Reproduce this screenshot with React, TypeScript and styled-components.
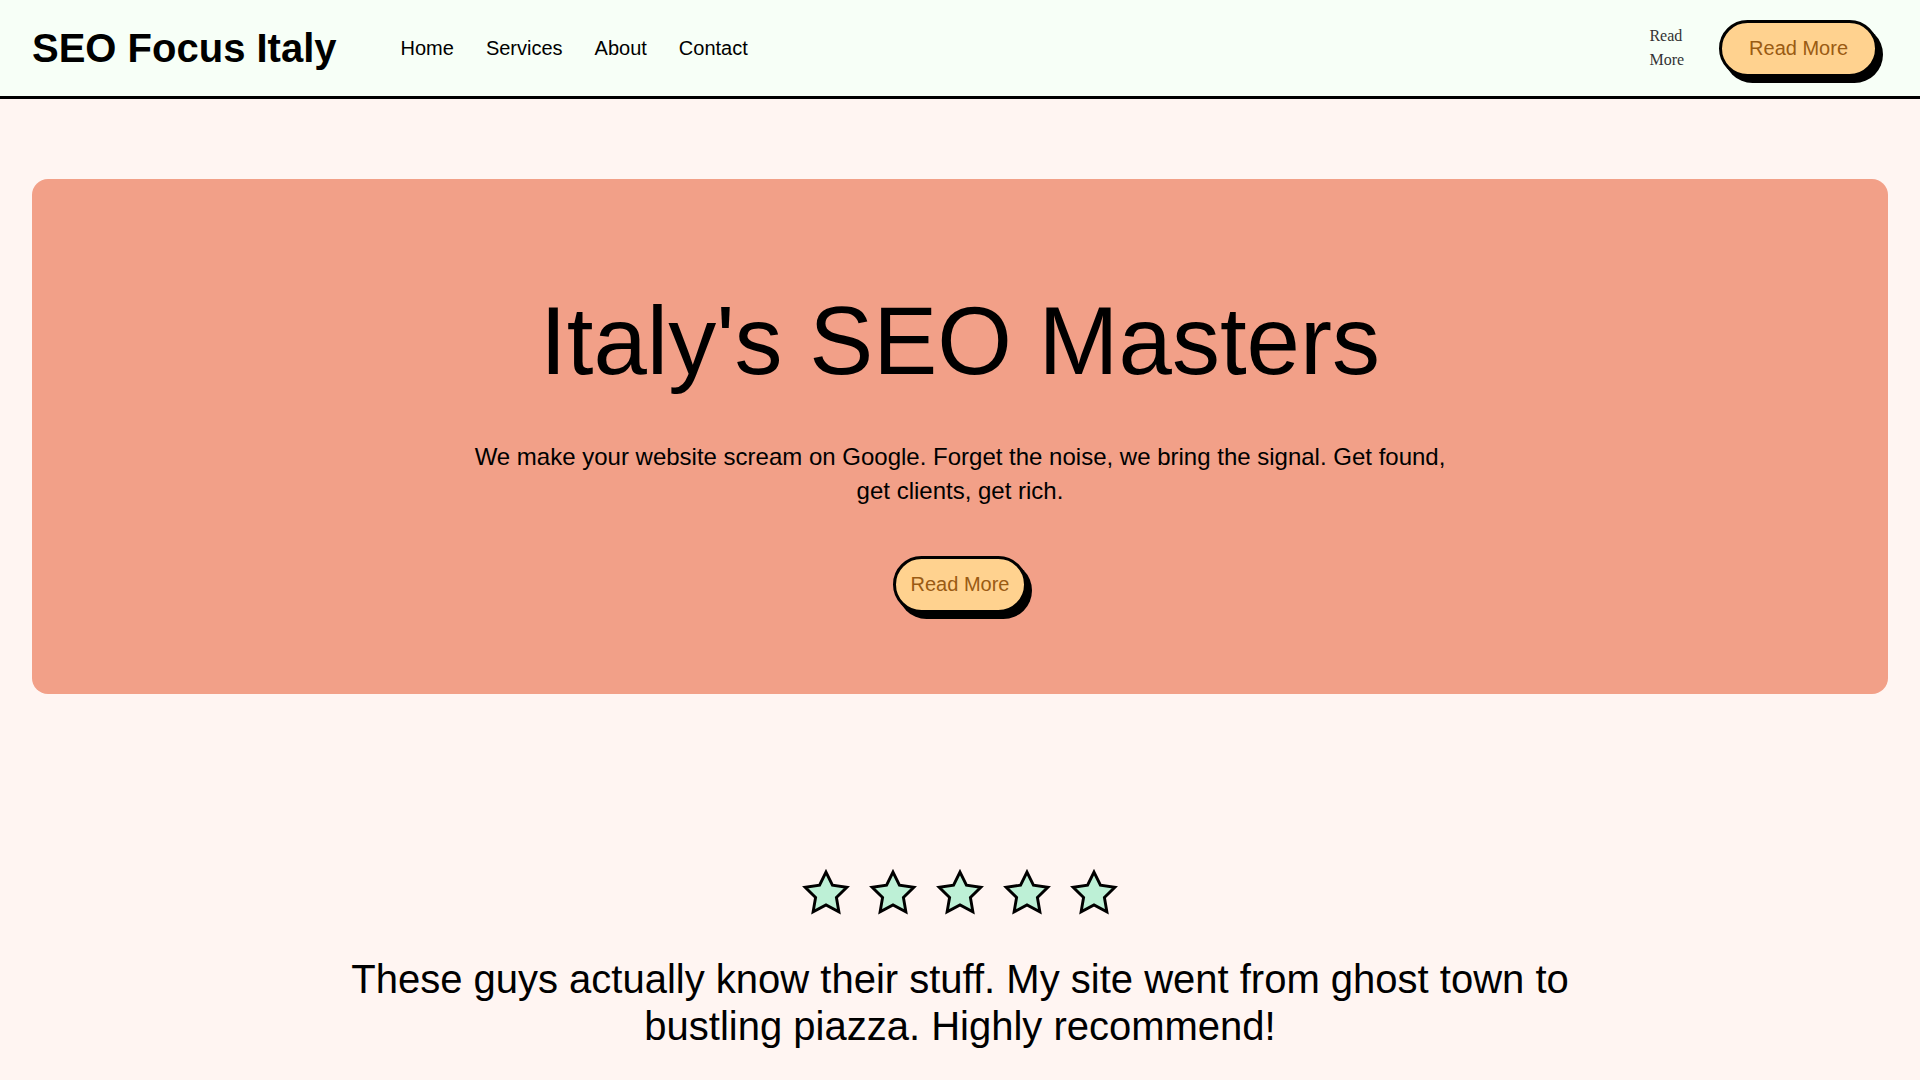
import React from "react";
import styled, { createGlobalStyle } from "styled-components";

const GlobalStyle = createGlobalStyle`
  body {
    margin: 0;
    background-color: #fff5f2;
    font-family: "Liberation Sans", Arial, sans-serif;
    color: #000;
  }
`;

const Header = styled.header`
  height: 96px;
  padding: 0 42px 0 32px;
  display: flex;
  align-items: center;
  background-color: #f7fff7;
  border-bottom: 3px solid #000;
`;

const Logo = styled.div`
  font-size: 40px;
  font-weight: 700;
  line-height: 46px;
`;

const Nav = styled.nav`
  margin-left: 64px;
  display: flex;
  gap: 32px;

  a {
    font-size: 20px;
    color: #000;
    text-decoration: none;
  }
`;

const HeaderActions = styled.div`
  margin-left: auto;
  display: flex;
  align-items: center;
  gap: 35px;
`;

const PlainLink = styled.a`
  width: min-content;
  font-family: "Liberation Serif", "Times New Roman", serif;
  font-size: 16px;
  line-height: 24px;
  color: #333;
  text-decoration: none;
`;

const PillButton = styled.button<{ $wide?: boolean }>`
  display: inline-block;
  padding: 14px ${({ $wide }) => ($wide ? "27px" : "15px")};
  font-family: "Liberation Sans", Arial, sans-serif;
  font-size: 20px;
  line-height: 23px;
  color: #9a5b13;
  background-color: #ffd28f;
  border: 3px solid #000;
  border-radius: 999px;
  box-shadow: 5px 6px 0 #000;
  cursor: pointer;
`;

const Main = styled.main`
  padding: 80px 32px 0;
`;

const Hero = styled.section`
  padding: 107px 32px 81px;
  background-color: #f2a088;
  border-radius: 16px;
  text-align: center;
`;

const HeroTitle = styled.h1`
  margin: 0;
  font-size: 96px;
  font-weight: 400;
  line-height: 1.15;
`;

const HeroText = styled.p`
  max-width: 1000px;
  margin: 44px auto 48px;
  font-size: 24px;
  line-height: 1.4;
`;

const Testimonial = styled.section`
  padding-top: 174px;
  text-align: center;
`;

const Stars = styled.div`
  display: flex;
  justify-content: center;
  gap: 17px;
`;

const Quote = styled.p`
  max-width: 1280px;
  margin: 38px auto 0;
  font-size: 40px;
  line-height: 47px;
`;

const Star = () => (
  <svg width="50" height="50" viewBox="0 0 24 24">
    <polygon
      points="12,2 15.09,8.26 22,9.27 17,14.14 18.18,21.02 12,17.77 5.82,21.02 7,14.14 2,9.27 8.91,8.26"
      fill="#bdf0d6"
      stroke="#000"
      strokeWidth="1.4"
      strokeLinejoin="miter"
    />
  </svg>
);

export default function App() {
  return (
    <>
      <GlobalStyle />
      <Header>
        <Logo>SEO Focus Italy</Logo>
        <Nav>
          <a href="#">Home</a>
          <a href="#">Services</a>
          <a href="#">About</a>
          <a href="#">Contact</a>
        </Nav>
        <HeaderActions>
          <PlainLink href="#">Read More</PlainLink>
          <PillButton $wide>Read More</PillButton>
        </HeaderActions>
      </Header>
      <Main>
        <Hero>
          <HeroTitle>Italy's SEO Masters</HeroTitle>
          <HeroText>
            We make your website scream on Google. Forget the noise, we bring the signal. Get found,
            get clients, get rich.
          </HeroText>
          <PillButton>Read More</PillButton>
        </Hero>
        <Testimonial>
          <Stars>
            {[0, 1, 2, 3, 4].map((i) => (
              <Star key={i} />
            ))}
          </Stars>
          <Quote>
            These guys actually know their stuff. My site went from ghost town to bustling piazza. Highly
            recommend!
          </Quote>
        </Testimonial>
      </Main>
    </>
  );
}
